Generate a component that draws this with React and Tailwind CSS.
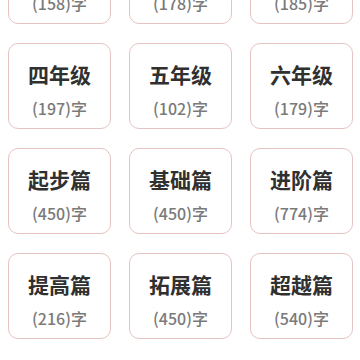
const ITEMS = [
  { title: '一年级', count: 158 },
  { title: '二年级', count: 178 },
  { title: '三年级', count: 185 },
  { title: '四年级', count: 197 },
  { title: '五年级', count: 102 },
  { title: '六年级', count: 179 },
  { title: '起步篇', count: 450 },
  { title: '基础篇', count: 450 },
  { title: '进阶篇', count: 774 },
  { title: '提高篇', count: 216 },
  { title: '拓展篇', count: 450 },
  { title: '超越篇', count: 540 },
];

export default function App() {
  return (
    <div
      className="w-[360px] h-[360px] overflow-hidden bg-white"
      style={{ fontFamily: '"Noto Sans CJK SC", sans-serif' }}
    >
      <div className="-mt-[62px] pl-[8px] pr-[7px] grid grid-cols-3 gap-x-[18px] gap-y-[19px]">
        {ITEMS.map(({ title, count }) => (
          <div
            key={title}
            className="h-[86px] rounded-[10px] border-[1.5px] border-[#e6c3c3] flex flex-col items-center"
          >
            <div className="mt-[16px] text-[21px] leading-[28px] font-bold text-[#303030]">
              {title}
            </div>
            <div className="mt-[10px] text-[16px] leading-[20px] font-medium text-[#7a7a7a]">
              ({count})字
            </div>
          </div>
        ))}
      </div>
    </div>
  );
}
